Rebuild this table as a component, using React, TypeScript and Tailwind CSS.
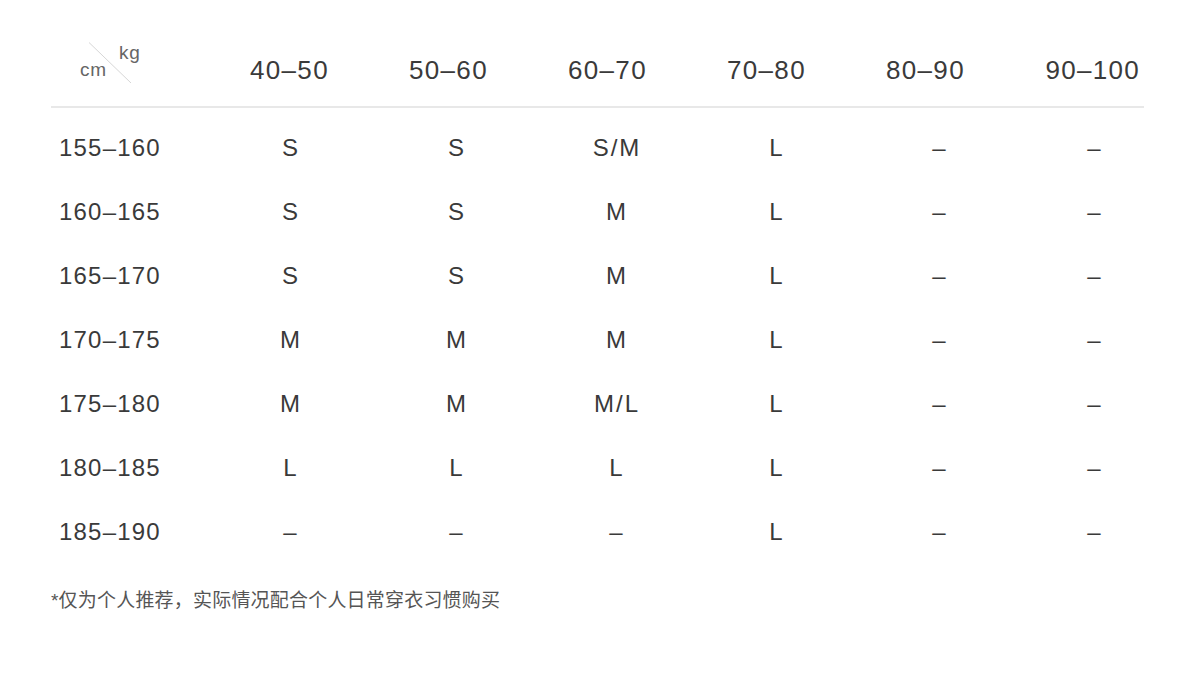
import React from "react";

const headers = ["40–50", "50–60", "60–70", "70–80", "80–90"];
const rows: [string, string[]][] = [
  ["155–160", ["S", "S", "S/M", "L", "–", "–"]],
  ["160–165", ["S", "S", "M", "L", "–", "–"]],
  ["165–170", ["S", "S", "M", "L", "–", "–"]],
  ["170–175", ["M", "M", "M", "L", "–", "–"]],
  ["175–180", ["M", "M", "M/L", "L", "–", "–"]],
  ["180–185", ["L", "L", "L", "L", "–", "–"]],
  ["185–190", ["–", "–", "–", "L", "–", "–"]],
];
const bodyWidths = ["w-[162px]", "w-[170px]", "w-[150px]", "w-[170px]", "w-[156px]", "w-[154px]"];

export default function App() {
  return (
    <div
      className="w-[1200px] h-[689px] bg-white text-[#3a3a3a]"
      style={{ fontFamily: '"Liberation Sans", Arial, "Noto Sans CJK SC", sans-serif' }}
    >
      <div className="pl-[51px] pt-[34px]">
        <div className="w-[1093px] flex h-[72px] items-center border-b-2 border-[#e8e8e8] box-content">
          <div className="w-[159px] h-full relative shrink-0">
            <svg className="absolute left-[37px] top-[8px]" width="44" height="42" viewBox="0 0 44 42">
              <line x1="1" y1="0.5" x2="43" y2="41" stroke="#d6d6d6" strokeWidth="1" />
            </svg>
            <span className="absolute left-[29px] top-[22px] text-[19px] text-[#666] tracking-[0.8px]">cm</span>
            <span className="absolute left-[68px] top-[5px] text-[19px] text-[#666] tracking-[0.8px]">kg</span>
          </div>
          {headers.map((h) => (
            <div key={h} className="w-[159px] shrink-0 text-center text-[26px] tracking-[1.3px]">
              {h}
            </div>
          ))}
          <div className="w-[139px] shrink-0 text-right pr-[4px] text-[26px] tracking-[1.3px]">90–100</div>
        </div>
        <div className="pt-[8px]">
          {rows.map(([label, cells]) => (
            <div key={label} className="flex h-[64px] items-center">
              <div className="w-[159px] shrink-0 pl-[8px] text-[24px] tracking-[1.2px]">{label}</div>
              {cells.map((c, i) => (
                <div key={i} className={`${bodyWidths[i]} shrink-0 text-center text-[24px] tracking-[2px]`}>
                  {c}
                </div>
              ))}
            </div>
          ))}
        </div>
        <div className="mt-[23px] text-[19px] leading-[28px] tracking-[0.2px] text-[#555]">*仅为个人推荐，实际情况配合个人日常穿衣习惯购买</div>
      </div>
    </div>
  );
}
